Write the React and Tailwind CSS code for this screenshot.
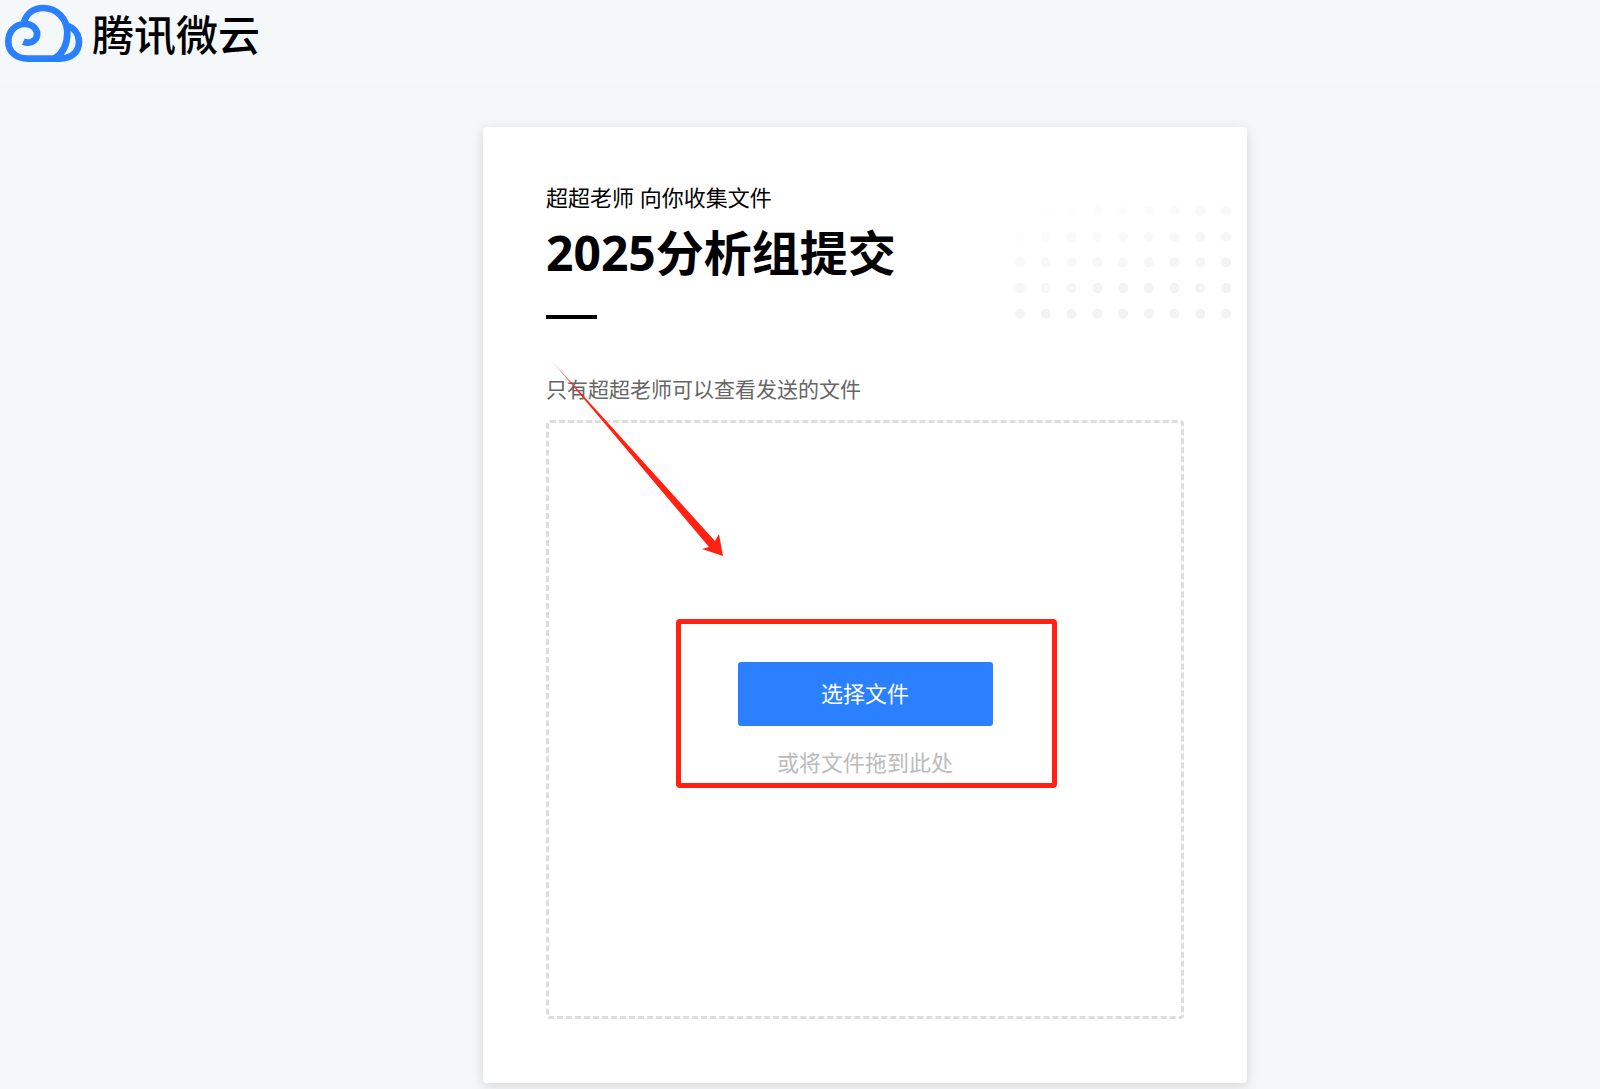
import React from 'react';

const DOT_ROWS = 5;
const DOT_COLS = 9;

function CloudLogo() {
  return (
    <svg viewBox="0 0 252 192" className="h-16 w-[84px] shrink-0" fill="none" stroke="#2a80ff" strokeWidth="20" aria-hidden="true">
      <path d="M70 125C86 132 104 126 110 111C116 92 101 72 75 72C45 72 25 95 25 125C25 156 50 176 84 176H180C214 176 237 156 237 126C237 102 222 84 201 77" />
      <path d="M72 66C80 40 102 24 130 24C170 24 202 56 202 98C202 134 188 160 164 175" />
    </svg>
  );
}

function DotPattern() {
  const dots = [];
  for (let r = 0; r < DOT_ROWS; r++) {
    for (let c = 0; c < DOT_COLS; c++) {
      const opacity = Math.min(1, 0.03 + r * 0.23 + c * 0.06);
      dots.push(<circle key={`${r}-${c}`} cx={5 + c * 25.75} cy={5 + r * 25.7} r="5" fill="#f3f3f3" opacity={opacity} />);
    }
  }
  return (
    <svg viewBox="0 0 216 113" className="absolute top-[79px] right-4 h-[113px] w-[216px]" aria-hidden="true">
      {dots}
    </svg>
  );
}

function Arrow() {
  return (
    <svg viewBox="0 0 180 204" className="pointer-events-none absolute -top-[66px] left-0 h-[204px] w-[180px]" aria-hidden="true">
      <defs>
        <linearGradient id="arrow-fade" gradientUnits="userSpaceOnUse" x1="2" y1="3" x2="28" y2="33">
          <stop offset="0" stopColor="#ff2213" stopOpacity="0.4" />
          <stop offset="1" stopColor="#ff2213" />
        </linearGradient>
      </defs>
      <path d="M2 3L166 184L170 177L174 199L153 192L160 190Z" fill="url(#arrow-fade)" />
    </svg>
  );
}

export default function App() {
  return (
    <div className="min-h-screen bg-[#f4f6f8] font-['Open_Sans','Noto_Sans_CJK_SC',sans-serif] text-black">
      <header className="flex h-[84px] items-start bg-[#f4f8fb]">
        <CloudLogo />
        <span className="pt-[3px] pl-2 text-[42px] leading-[64px] font-medium">腾讯微云</span>
      </header>

      <main className="flex justify-center pt-[43px] pb-[6px] pl-[130px]">
        <section className="relative w-[764px] rounded bg-white px-[63px] pt-[54px] pb-16 shadow-[0_3px_12px_rgba(0,0,0,0.13)]">
          <DotPattern />
          <p className="text-[22px] leading-8">超超老师 向你收集文件</p>
          <h1 className="mt-2 text-[48px] leading-[64px] font-bold">2025分析组提交</h1>
          <div className="mt-[30px] h-1 w-[51px] bg-black" />
          <p className="mt-[54px] text-[21px] leading-8 text-[#666]">只有超超老师可以查看发送的文件</p>

          {/* Drop zone */}
          <div className="relative mt-[15px] flex h-[599px] flex-col items-center justify-center rounded border-3 border-dashed border-[#ddd]">
            <Arrow />
            <div className="relative flex flex-col items-center">
              <button type="button" className="h-16 w-[255px] rounded-[3px] bg-[#2a80ff] text-[22px] text-white">
                选择文件
              </button>
              <p className="mt-5 text-[22px] leading-8 text-[#bbb]">或将文件拖到此处</p>
              <div className="pointer-events-none absolute -top-[43px] -right-16 -bottom-[10px] -left-[62px] rounded border-5 border-[#ff2213]" />
            </div>
          </div>
        </section>
      </main>
    </div>
  );
}
